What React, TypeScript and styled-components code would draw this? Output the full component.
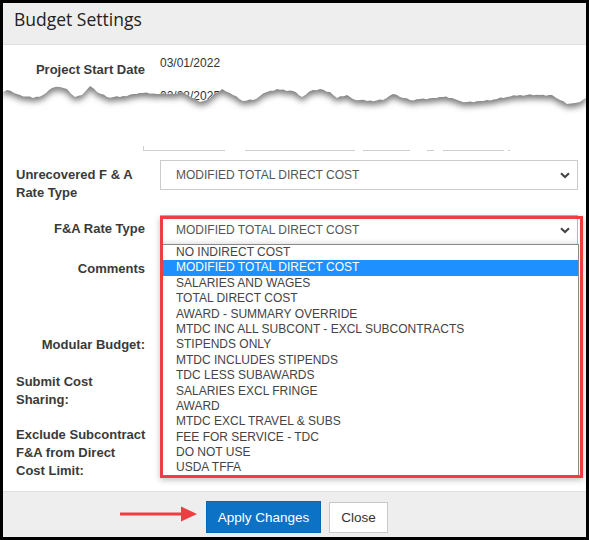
import React from 'react';
import styled, { createGlobalStyle } from 'styled-components';

const GlobalStyle = createGlobalStyle`
  html, body { margin: 0; padding: 0; background: #fff; }
  body { font-family: "Liberation Sans", Arial, sans-serif; }
  * { box-sizing: border-box; }
`;

const Frame = styled.div`
  width: 589px;
  height: 540px;
  border: 3px solid #000;
  display: flex;
  flex-direction: column;
  background: #fff;
  overflow: hidden;
`;

const Header = styled.div`
  height: 42px;
  flex-shrink: 0;
  background: #eeeeee;
  border-bottom: 1px solid #dedede;
  padding: 5px 0 0 11px;
`;

const Title = styled.h1`
  margin: 0;
  font-family: "Open Sans", "Liberation Sans", sans-serif;
  font-weight: 500;
  font-size: 17.5px;
  line-height: 22px;
  color: #222;
`;

const Body = styled.div`
  flex: 1;
  min-height: 0;
  padding-top: 11px;
  position: relative;
`;

const FormRow = styled.div<{ $mt?: number }>`
  display: grid;
  grid-template-columns: 129px 418px;
  column-gap: 15px;
  padding-left: 13px;
  margin-top: ${p => p.$mt ?? 0}px;
  align-items: start;
`;

const Label = styled.div<{ $align?: 'left' | 'right'; $pt?: number }>`
  font-weight: bold;
  font-size: 13px;
  line-height: 18px;
  color: #3a3a3a;
  white-space: nowrap;
  text-align: ${p => p.$align ?? 'right'};
  padding-top: ${p => p.$pt ?? 0}px;
`;

const StaticValue = styled.div<{ $pt?: number }>`
  font-size: 12px;
  line-height: 14px;
  color: #333;
  padding-top: ${p => p.$pt ?? 0}px;
`;

const TornSection = styled.div`
  position: relative;
  height: 67px;
`;

const TearOverlay = styled.svg`
  position: absolute;
  top: 0;
  left: 0;
`;

const Remnants = styled.div`
  display: flex;
  height: 5px;
  margin-left: 140px;
`;

const Remnant = styled.span<{ $w: number; $ml: number; $tick?: boolean }>`
  display: block;
  width: ${p => p.$w}px;
  margin-left: ${p => p.$ml}px;
  height: 5px;
  border-bottom: 1px solid #cfcfcf;
  border-left: ${p => (p.$tick ? '1px solid #cfcfcf' : 'none')};
`;

const SelectBox = styled.div<{ $focused?: boolean }>`
  height: 30px;
  border: 1px solid ${p => (p.$focused ? '#8fc1ea' : '#cccccc')};
  background: #fff;
  display: flex;
  align-items: center;
  justify-content: space-between;
  padding: 0 7px 0 15px;
  font-size: 12px;
  color: #555;
  box-shadow: ${p => (p.$focused ? 'inset 0 -4px 6px -4px rgba(0,0,0,0.18)' : 'none')};
`;

const SelectWrap = styled.div`
  position: relative;
`;

const ListBox = styled.div`
  position: absolute;
  top: 29px;
  left: 2px;
  width: 417px;
  background: #fff;
  border: 1px solid #8a8a8a;
  z-index: 2;
`;

const Option = styled.div<{ $active?: boolean }>`
  height: 15.4px;
  line-height: 15.4px;
  padding-left: 13px;
  font-size: 12px;
  color: ${p => (p.$active ? '#fff' : '#444')};
  background: ${p => (p.$active ? '#1e90ff' : 'transparent')};
  white-space: nowrap;
`;

const Highlight = styled.div`
  position: absolute;
  top: 1px;
  left: 0;
  width: 423px;
  height: 262px;
  border: 3px solid #ee3e42;
  box-shadow: 0 2px 6px rgba(0, 0, 0, 0.25);
  z-index: 3;
  pointer-events: none;
`;

const TextArea = styled.div`
  height: 64px;
  border: 1px solid #ccc;
`;

const Footer = styled.div`
  height: 46px;
  flex-shrink: 0;
  background: #eeeeee;
  border-top: 1px solid #dedede;
  display: flex;
  align-items: flex-start;
  padding: 9px 0 0 117px;
`;

const Arrow = styled.svg`
  margin-top: 5px;
  margin-right: 9px;
`;

const PrimaryButton = styled.button`
  height: 32px;
  width: 115px;
  border: 1px solid #0a66b3;
  background: #0b72c6;
  color: #fff;
  font-family: "Liberation Sans", Arial, sans-serif;
  font-size: 13.5px;
  padding: 0;
  margin-right: 8px;
`;

const SecondaryButton = styled.button`
  height: 31px;
  width: 59px;
  margin-top: 1px;
  border: 1px solid #c8c8c8;
  background: #fff;
  color: #333;
  font-family: "Liberation Sans", Arial, sans-serif;
  font-size: 13.5px;
  padding: 0;
`;

const Chevron = () => (
  <svg width="10" height="7" viewBox="0 0 10 7">
    <polyline points="1,1.2 5,5 9,1.2" fill="none" stroke="#444" strokeWidth="2" />
  </svg>
);

const OPTIONS = [
  'NO INDIRECT COST',
  'MODIFIED TOTAL DIRECT COST',
  'SALARIES AND WAGES',
  'TOTAL DIRECT COST',
  'AWARD - SUMMARY OVERRIDE',
  'MTDC INC ALL SUBCONT - EXCL SUBCONTRACTS',
  'STIPENDS ONLY',
  'MTDC INCLUDES STIPENDS',
  'TDC LESS SUBAWARDS',
  'SALARIES EXCL FRINGE',
  'AWARD',
  'MTDC EXCL TRAVEL & SUBS',
  'FEE FOR SERVICE - TDC',
  'DO NOT USE',
  'USDA TFFA',
];

// torn edge points in page coordinates
const EDGE_BASE: [number, number][] = [
  [3, 92], [7, 90], [14, 93], [20, 95], [33, 98], [43, 95], [52, 88], [60, 87], [67, 89],
  [75, 97], [82, 95], [90, 86], [97, 92], [107, 97], [120, 97], [133, 94], [143, 93],
  [157, 94], [173, 94], [182, 92], [187, 95], [195, 99], [200, 102], [207, 100], [213, 95],
  [222, 89], [233, 95], [243, 101], [253, 100], [267, 92], [277, 89], [293, 91], [302, 97],
  [313, 90], [320, 89], [330, 92], [337, 98], [347, 95], [353, 99], [367, 101], [383, 100],
  [393, 94], [400, 97], [410, 100], [420, 99], [433, 98], [443, 97], [452, 98], [460, 101],
  [467, 102], [480, 101], [497, 99], [507, 97], [520, 95], [540, 95], [552, 95], [560, 100],
  [567, 104], [575, 103], [580, 102], [586, 98],
];

// add fine roughness between base points (deterministic)
const EDGE: [number, number][] = [];
EDGE_BASE.forEach(([x, y], i) => {
  EDGE.push([x, y]);
  const next = EDGE_BASE[i + 1];
  if (next) {
    const steps = Math.max(1, Math.floor((next[0] - x) / 3));
    for (let s = 1; s < steps; s++) {
      const t = s / steps;
      const jitter = ((i * 7 + s * 13) % 5) * 0.35 - 0.7;
      EDGE.push([x + (next[0] - x) * t, y + (next[1] - y) * t + jitter]);
    }
  }
});

const TOP = 79;
const W = 583;
const H = 67;
const pts = EDGE.map(([x, y]) => `${(x - 3).toFixed(1)},${(y - TOP).toFixed(1)}`);
const edgeLine = pts.join(' L');
const lowerPath = `M${edgeLine} L${W},${H} L0,${H} Z`;
const upperPath = `M0,0 L${W},0 L${[...pts].reverse().join(' L')} Z`;

const REMNANTS = [
  { ml: 0, w: 82, tick: true },
  { ml: 20, w: 110 },
  { ml: 8, w: 47 },
  { ml: 17, w: 7 },
  { ml: 9, w: 61 },
  { ml: 4, w: 2 },
];

export default function App() {
  return (
    <>
      <GlobalStyle />
      <Frame>
        <Header>
          <Title>Budget Settings</Title>
        </Header>
        <Body>
          <FormRow>
            <Label $pt={5}>Project Start Date</Label>
            <StaticValue>03/01/2022</StaticValue>
          </FormRow>

          <TornSection>
            <FormRow>
              <span />
              <StaticValue $pt={10}>02/28/2025</StaticValue>
            </FormRow>
            <TearOverlay width={W} height={H} viewBox={`0 0 ${W} ${H}`}>
              <defs>
                <clipPath id="lowerClip">
                  <path d={lowerPath} />
                </clipPath>
                <filter id="tearBlur" x="-5%" y="-50%" width="110%" height="200%">
                  <feGaussianBlur stdDeviation="3.2" />
                </filter>
              </defs>
              <path d={lowerPath} fill="#fff" />
              <g clipPath="url(#lowerClip)">
                <path d={upperPath} fill="#7a7a7a" filter="url(#tearBlur)" transform="translate(0,4)" />
              </g>
            </TearOverlay>
          </TornSection>

          <Remnants>
            {REMNANTS.map((r, i) => (
              <Remnant key={i} $w={r.w} $ml={r.ml} $tick={r.tick} />
            ))}
          </Remnants>

          <FormRow $mt={9}>
            <Label $align="left" $pt={6}>
              Unrecovered F &amp; A<br />Rate Type
            </Label>
            <SelectBox>
              <span>MODIFIED TOTAL DIRECT COST</span>
              <Chevron />
            </SelectBox>
          </FormRow>

          <FormRow $mt={13}>
            <Label $pt={5}>F&amp;A Rate Type</Label>
            <SelectWrap>
              <SelectBox $focused>
                <span>MODIFIED TOTAL DIRECT COST</span>
                <Chevron />
              </SelectBox>
              <ListBox>
                {OPTIONS.map((o, i) => (
                  <Option key={o} $active={i === 1}>
                    {o}
                  </Option>
                ))}
              </ListBox>
              <Highlight />
            </SelectWrap>
          </FormRow>

          <FormRow $mt={15}>
            <Label>Comments</Label>
            <TextArea />
          </FormRow>

          <FormRow $mt={12}>
            <Label>Modular Budget:</Label>
            <span />
          </FormRow>

          <FormRow $mt={19}>
            <Label $align="left">
              Submit Cost
              <br />
              Sharing:
            </Label>
            <span />
          </FormRow>

          <FormRow $mt={17}>
            <Label $align="left">
              Exclude Subcontract
              <br />
              F&amp;A from Direct
              <br />
              Cost Limit:
            </Label>
            <span />
          </FormRow>
        </Body>
        <Footer>
          <Arrow width="77" height="16" viewBox="0 0 77 16">
            <line x1="0" y1="8" x2="64" y2="8" stroke="#ee3e42" strokeWidth="3.2" />
            <polygon points="61,0.5 77,8 61,15.5" fill="#ee3e42" />
          </Arrow>
          <PrimaryButton>Apply Changes</PrimaryButton>
          <SecondaryButton>Close</SecondaryButton>
        </Footer>
      </Frame>
    </>
  );
}
